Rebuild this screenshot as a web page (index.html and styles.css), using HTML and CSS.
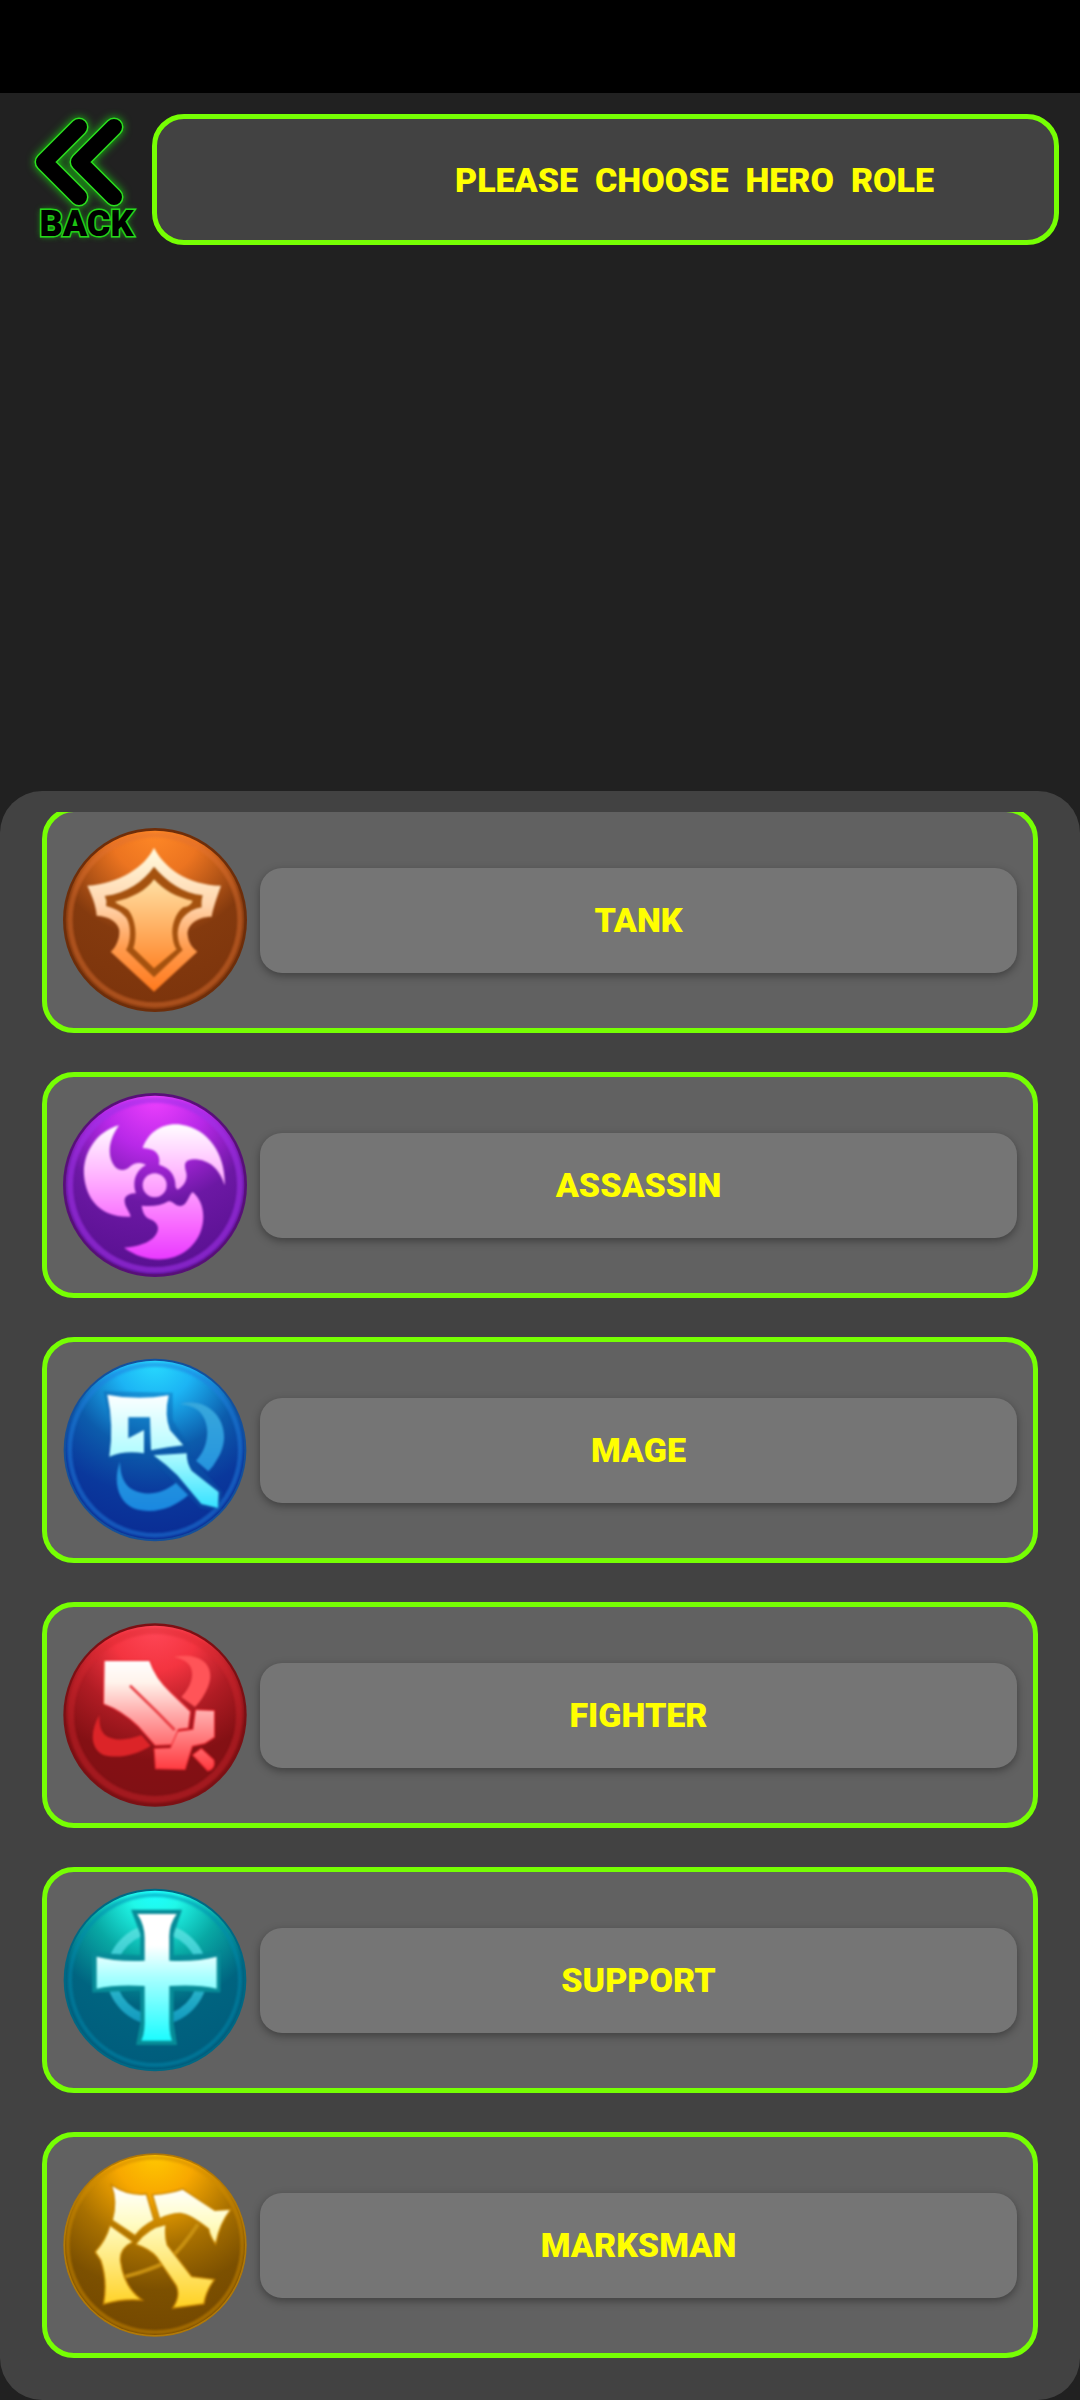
FILE: index.html
```html
<!DOCTYPE html>
<html lang="en">
<head>
<meta charset="utf-8">
<meta name="viewport" content="width=device-width, initial-scale=1">
<title>Choose hero role</title>
<link rel="stylesheet" href="styles.css">
</head>
<body>
<div class="status-bar"></div>
<header class="top">
  <button class="back" type="button">
    <svg class="back-icon" viewBox="21 114 131 92" aria-hidden="true">
      <g fill="none" stroke-linecap="round" stroke-linejoin="round">
        <g stroke="#2be01e" stroke-width="19">
          <path d="M79 127L44 162L79 197"/><path d="M114 127L79 162L114 197"/>
        </g>
        <g stroke="#000" stroke-width="16">
          <path d="M79 127L44 162L79 197"/><path d="M114 127L79 162L114 197"/>
        </g>
      </g>
    </svg>
    <span class="back-label">BACK</span>
  </button>
  <h1 class="title">PLEASE  CHOOSE  HERO  ROLE</h1>
</header>

<main class="panel">
  <ul class="roles">
    <li class="card">
      <svg class="icon" viewBox="189 174 552 552" aria-hidden="true">
        <defs>
          <radialGradient id="tankBg" cx=".5" cy="0" r="1"><stop offset="0" stop-color="#ff8826"/><stop offset=".25" stop-color="#ec7420"/><stop offset=".6" stop-color="#843a0e"/><stop offset="1" stop-color="#7c340c"/></radialGradient>
          <linearGradient id="tankOut" x1="0" y1="0" x2="0" y2="1"><stop offset="0" stop-color="#fffce0"/><stop offset=".4" stop-color="#ffd4ac"/><stop offset=".7" stop-color="#ff9a4c"/><stop offset="1" stop-color="#ff7a1e"/></linearGradient>
          <linearGradient id="tankIn" x1="0" y1="0" x2="0" y2="1"><stop offset="0" stop-color="#ffe0a4"/><stop offset="1" stop-color="#ff882c"/></linearGradient>
        </defs>
        <circle cx="465" cy="450" r="276" fill="#6e2e0a"/>
        <circle cx="465" cy="450" r="268" fill="url(#tankBg)"/>
        <circle class="soft" cx="465" cy="450" r="255" fill="none" stroke="#e07030" stroke-opacity=".45" stroke-width="16"/>
        <g class="soft">
          <path fill="url(#tankOut)" d="M462 233C490 290 560 345 663 347C650 385 640 410 635 440C590 440 560 465 563 495C566 520 578 535 592 545L462 665L332 545C345 535 360 510 358 480C352 455 330 440 290 437C288 405 275 375 262 347C360 340 435 290 462 233Z"/>
          <path fill="#a5520f" d="M462 290C500 335 550 370 608 376C604 390 604 400 605 412C560 420 535 450 533 490C534 515 540 530 548 540L462 622L378 540C392 520 395 470 380 445C365 425 345 415 318 408C320 395 320 390 314 378C380 370 430 335 462 290Z"/>
          <path fill="url(#tankIn)" d="M462 328C490 360 530 382 578 392C575 402 565 410 550 412C525 430 513 470 518 500C520 520 525 530 530 538L462 595L400 535C412 500 408 450 385 420C370 408 355 405 345 395C395 385 440 360 462 328Z"/>
        </g>
      </svg>
      <button class="role" type="button">TANK</button>
    </li>
    <li class="card">
      <svg class="icon" viewBox="69 99 552 552" aria-hidden="true">
        <defs>
          <radialGradient id="asnBg" cx=".5" cy="0" r="1"><stop offset="0" stop-color="#f040ff"/><stop offset=".3" stop-color="#b828e8"/><stop offset=".6" stop-color="#6c18a4"/><stop offset="1" stop-color="#581090"/></radialGradient>
          <linearGradient id="asnFg" gradientUnits="userSpaceOnUse" x1="0" y1="190" x2="0" y2="600"><stop offset="0" stop-color="#fff"/><stop offset=".4" stop-color="#ffb0ff"/><stop offset=".75" stop-color="#f868ff"/><stop offset="1" stop-color="#e838ff"/></linearGradient>
        </defs>
        <circle cx="345" cy="375" r="276" fill="#581078"/>
        <circle cx="345" cy="375" r="268" fill="url(#asnBg)"/>
        <circle class="soft" cx="345" cy="375" r="255" fill="none" stroke="#a030e8" stroke-opacity=".6" stroke-width="18"/>
        <g class="soft" fill="url(#asnFg)">
          <path d="M237 196C165 215 128 285 132 345C138 425 190 475 272 470C270 455 252 440 254 418C258 403 275 400 288 400C275 365 288 330 318 315C300 306 285 308 272 318C258 332 240 335 225 320C200 290 205 240 237 196Z"/>
          <path d="M308 264C325 215 370 186 424 194C510 207 558 290 554 376C540 330 510 298 460 298C432 300 432 315 438 335C444 355 435 375 415 388C408 390 406 380 406 370C404 342 385 322 357 314C362 285 350 266 308 264Z"/>
          <path d="M252 563C330 620 440 610 480 520C500 470 488 420 458 396C446 405 442 436 422 438C402 437 398 420 385 424C362 438 335 440 305 437C308 455 312 470 330 478C355 488 360 506 347 525C330 550 290 560 252 563Z"/>
          <circle cx="344" cy="376" r="36"/>
        </g>
      </svg>
      <button class="role" type="button">ASSASSIN</button>
    </li>
    <li class="card">
      <svg class="icon" viewBox="69 84 552 552" aria-hidden="true">
        <defs>
          <radialGradient id="mageBg" cx=".5" cy="0" r="1"><stop offset="0" stop-color="#28dcff"/><stop offset=".22" stop-color="#1cb4f4"/><stop offset=".5" stop-color="#0c5cac"/><stop offset=".75" stop-color="#0a389c"/><stop offset="1" stop-color="#0a2c94"/></radialGradient>
          <linearGradient id="mageFg" gradientUnits="userSpaceOnUse" x1="0" y1="190" x2="0" y2="540"><stop offset="0" stop-color="#fff"/><stop offset=".5" stop-color="#b4fcff"/><stop offset="1" stop-color="#30e0ff"/></linearGradient>
          <linearGradient id="mageRing" x1="0" y1="0" x2="0" y2="1"><stop offset="0" stop-color="#38a8dc"/><stop offset="1" stop-color="#1a88e0"/></linearGradient>
        </defs>
        <circle cx="345" cy="360" r="274" fill="#14509c"/>
        <circle cx="345" cy="360" r="268" fill="url(#mageBg)"/>
        <circle class="soft" cx="345" cy="360" r="256" fill="none" stroke="#2080e0" stroke-opacity=".5" stroke-width="14"/>
        <g class="soft">
          <path fill="url(#mageRing)" d="M420 222C520 195 590 300 530 390Q520 410 505 424L468 392C510 350 515 270 470 238C455 228 440 224 420 222ZM240 395C220 450 230 510 280 535C340 555 400 535 445 495L408 458C370 490 320 500 280 480C250 465 240 430 240 395Z"/>
          <path fill="#0a58a8" d="M190 184L398 188L398 270L446 350L444 372L548 486L542 544L480 534L332 382L206 390L212 280Z" opacity=".4"/>
          <path fill="url(#mageFg)" d="M202 194Q290 212 386 196Q372 255 390 300L430 346Q385 350 333 361L330 262L265 262L265 325L312 300L312 370Q255 360 208 380Q222 285 202 194Z"/>
          <path fill="url(#mageFg)" d="M341 376L440 370Q440 400 455 422L536 486L534 534L484 522L412 436Q378 403 341 376Z"/>
        </g>
      </svg>
      <button class="role" type="button">MAGE</button>
    </li>
    <li class="card">
      <svg class="icon" viewBox="69 84 552 552" aria-hidden="true">
        <defs>
          <radialGradient id="ftrBg" cx=".5" cy="0" r="1"><stop offset="0" stop-color="#ff4858"/><stop offset=".25" stop-color="#f43440"/><stop offset=".5" stop-color="#b01c24"/><stop offset=".75" stop-color="#841014"/><stop offset="1" stop-color="#801014"/></radialGradient>
          <linearGradient id="ftrFg" gradientUnits="userSpaceOnUse" x1="0" y1="195" x2="0" y2="525"><stop offset="0" stop-color="#fff"/><stop offset=".2" stop-color="#fff4ec"/><stop offset=".5" stop-color="#ffa8a8"/><stop offset="1" stop-color="#ff3a40"/></linearGradient>
        </defs>
        <circle cx="345" cy="360" r="275" fill="#7c1014"/>
        <circle cx="345" cy="360" r="268" fill="url(#ftrBg)"/>
        <circle class="soft" cx="345" cy="360" r="253" fill="none" stroke="#d82830" stroke-opacity=".4" stroke-width="20"/>
        <g class="soft">
          <path fill="#ff5458" d="M400 186C480 170 530 210 504 275Q490 310 465 336L424 306C455 275 470 225 440 202Q425 190 400 186Z"/>
          <path fill="#dc2428" d="M178 360C150 410 150 460 190 480C235 492 290 480 332 452L304 420C265 435 220 440 195 420C180 405 178 385 178 360Z"/>
          <g fill="url(#ftrFg)" stroke="#f02830" stroke-width="6" paint-order="stroke">
            <path d="M194 198L328 198Q345 250 392 294L450 350L444 398L414 402L398 448L346 450L295 392Q245 345 192 326Z"/>
            <path d="M468 346L522 348L522 426L494 444L456 452L434 522L348 520L344 462L392 460L414 410L460 404Z"/>
            <path d="M460 480L484 462L520 496Q526 520 504 526Z"/>
          </g>
          <path d="M270 272L350 350L404 405" fill="none" stroke="#e83a40" stroke-width="8"/>
        </g>
      </svg>
      <button class="role" type="button">FIGHTER</button>
    </li>
    <li class="card">
      <svg class="icon" viewBox="69 84 552 552" aria-hidden="true">
        <defs>
          <radialGradient id="supBg" cx=".5" cy="0" r="1"><stop offset="0" stop-color="#1cffff"/><stop offset=".14" stop-color="#20f8e8"/><stop offset=".38" stop-color="#08a8a4"/><stop offset=".65" stop-color="#006480"/><stop offset="1" stop-color="#005c7c"/></radialGradient>
          <linearGradient id="supFg" gradientUnits="userSpaceOnUse" x1="0" y1="162" x2="0" y2="542"><stop offset="0" stop-color="#fff"/><stop offset=".25" stop-color="#fff"/><stop offset=".5" stop-color="#a8ffff"/><stop offset="1" stop-color="#1cfcff"/></linearGradient>
          <linearGradient id="supRing" x1="0" y1="0" x2="0" y2="1"><stop offset="0" stop-color="#50e0dc"/><stop offset="1" stop-color="#149cc0"/></linearGradient>
        </defs>
        <circle cx="345" cy="360" r="274" fill="#006884"/>
        <circle cx="345" cy="360" r="268" fill="url(#supBg)"/>
        <circle class="soft" cx="345" cy="360" r="255" fill="none" stroke="#008cb0" stroke-opacity=".5" stroke-width="12"/>
        <g class="soft">
          <circle cx="351" cy="343" r="137" fill="none" stroke="url(#supRing)" stroke-width="28"/>
          <path fill="none" stroke="#078c98" stroke-width="26" d="M292 162H408L388 220V300L528 292V384L388 378V490L396 542H304L314 490V378L170 384V292L314 300V220Z"/>
          <path fill="url(#supFg)" d="M292 162H410Q386 195 388 235V302Q470 306 530 290V386Q470 372 388 378V490Q388 520 396 542H304Q314 520 314 490V378Q230 372 170 386V290Q230 306 314 302V235Q314 195 292 162Z"/>
        </g>
      </svg>
      <button class="role" type="button">SUPPORT</button>
    </li>
    <li class="card">
      <svg class="icon" viewBox="69 99 552 552" aria-hidden="true">
        <defs>
          <radialGradient id="mmBg" cx=".5" cy="0" r="1"><stop offset="0" stop-color="#ffc800"/><stop offset=".22" stop-color="#f8a800"/><stop offset=".5" stop-color="#a87000"/><stop offset=".75" stop-color="#7c5000"/><stop offset="1" stop-color="#744800"/></radialGradient>
          <linearGradient id="mmFg" gradientUnits="userSpaceOnUse" x1="0" y1="200" x2="0" y2="565"><stop offset="0" stop-color="#fff"/><stop offset=".3" stop-color="#fffcc4"/><stop offset="1" stop-color="#ffd020"/></linearGradient>
        </defs>
        <circle cx="345" cy="375" r="275" fill="#b07808"/>
        <circle cx="345" cy="375" r="270" fill="url(#mmBg)"/>
        <circle class="soft" cx="345" cy="375" r="262" fill="none" stroke="#d08c00" stroke-opacity=".5" stroke-width="12"/>
        <g class="soft">
          <path d="M256 470Q330 450 380 425Q430 380 474 312" fill="none" stroke="#c89010" stroke-width="12"/>
          <g fill="url(#mmFg)" stroke="#c88400" stroke-width="8" paint-order="stroke">
            <path d="M217 199Q265 230 318 224L340 300Q305 318 285 344L219 300Q234 245 217 199Z"/>
            <path d="M340 226Q390 222 428 209L524 273L569 270Q538 310 526 368Q510 345 508 326Q450 280 420 278Q385 280 360 294Z"/>
            <path d="M211 319L276 365Q235 385 240 425Q250 500 300 538Q245 534 193 550Q205 480 184 420L168 396Q200 360 211 319Z"/>
            <path d="M290 372Q325 325 376 316Q372 350 380 376L454 472L520 480Q495 515 490 550L402 562Q425 525 410 495L352 410Q330 385 290 372Z"/>
          </g>
        </g>
      </svg>
      <button class="role" type="button">MARKSMAN</button>
    </li>
  </ul>
</main>
</body>
</html>
```
FILE: styles.css
```css
* {
  box-sizing: border-box;
}

body {
  margin: 0;
  min-height: 100vh;
  display: flex;
  flex-direction: column;
  background: #212121;
  font-family: Roboto, "Liberation Sans", sans-serif;
}

button {
  border: 0;
  font: inherit;
  cursor: pointer;
}

.status-bar {
  height: 93px;
  background: #000;
}

.top {
  display: flex;
  padding: 21px;
}

.back {
  width: 131px;
  flex: none;
  padding: 0;
  background: none;
  display: flex;
  flex-direction: column;
  align-items: center;
}

.back-icon {
  display: block;
  width: 131px;
  height: 92px;
  overflow: visible;
  filter: drop-shadow(0 0 4px #18c010);
}

.back-label {
  font-size: 36px;
  font-weight: 900;
  line-height: 36px;
  color: #000;
  -webkit-text-stroke: 3px #2be01e;
  paint-order: stroke fill;
  text-shadow: 0 0 6px #18c010;
}

.title {
  flex: 1;
  margin: 0;
  min-height: 131px;
  padding-left: 178px;
  display: flex;
  align-items: center;
  justify-content: center;
  white-space: pre;
  border: 5px solid #76ff03;
  border-radius: 32px;
  background: #424242;
  color: #ff0;
  font-size: 34px;
  font-weight: 900;
  line-height: 40px;
}

.panel {
  margin-top: auto;
  padding: 21px 42px 42px;
  border-radius: 42px;
  background: #424242;
}

/* The list is scrolled past the first card's top edge */
.roles {
  margin: 0;
  padding: 0;
  list-style: none;
  display: flex;
  flex-direction: column;
  gap: 39px;
  overflow: hidden;
}

.card {
  display: flex;
  align-items: center;
  gap: 13px;
  padding: 16px;
  border: 5px solid #76ff03;
  border-radius: 32px;
  background: #616161;
}

.card:first-child {
  margin-top: -5px;
}

.icon {
  display: block;
  flex: none;
  width: 184px;
  height: 184px;
}

.soft {
  filter: blur(3px);
}

.role {
  flex: 1;
  height: 105px;
  border-radius: 22px;
  background: #757575;
  box-shadow: 0 3px 8px rgba(0, 0, 0, 0.35);
  color: #ff0;
  font-size: 34px;
  font-weight: 900;
  line-height: 40px;
}
```
